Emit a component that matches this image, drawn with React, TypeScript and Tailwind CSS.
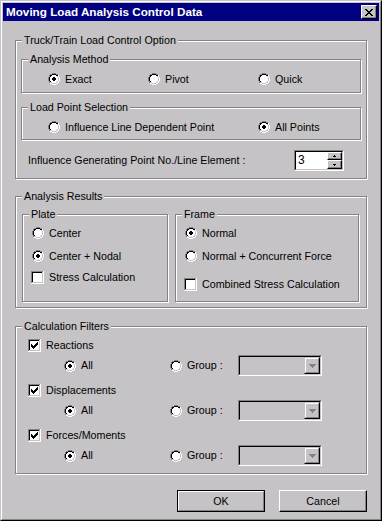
import React from "react";

type PixMap = Record<string, string>;

function Pix({ rows, colors }: { rows: string[]; colors: PixMap }) {
  const h = rows.length;
  const w = rows[0].length;
  const rects: React.ReactNode[] = [];
  rows.forEach((r, y) => {
    for (let x = 0; x < r.length; x++) {
      const c = colors[r[x]];
      if (c) rects.push(<rect key={`${x}-${y}`} x={x} y={y} width={1} height={1} fill={c} />);
    }
  });
  return (
    <svg width={w} height={h} viewBox={`0 0 ${w} ${h}`} shapeRendering="crispEdges" className="block shrink-0">
      {rects}
    </svg>
  );
}

const C: PixMap = { d: "#848284", k: "#000000", w: "#ffffff", h: "#ffffff", l: "#c6c3c6", K: "#000000" };

const RADIO = [
  "....dddd....",
  "..ddkkkkdd..",
  ".dkkwwwwkkh.",
  ".dkwwwwwwlh.",
  "dkwwwwwwwwlh",
  "dkwwwwwwwwlh",
  "dkwwwwwwwwlh",
  "dkwwwwwwwwlh",
  ".dkwwwwwwlh.",
  ".dllwwwwllh.",
  "..hhllllhh..",
  "....hhhh....",
];

function radioRows(checked: boolean) {
  if (!checked) return RADIO;
  const dot = [".KK.", "KKKK", "KKKK", ".KK."];
  return RADIO.map((r, y) => {
    if (y < 4 || y > 7) return r;
    const d = dot[y - 4];
    const s = r.split("");
    for (let i = 0; i < 4; i++) if (d[i] === "K") s[4 + i] = "K";
    return s.join("");
  });
}

function Radio({ checked = false }: { checked?: boolean }) {
  return <Pix rows={radioRows(checked)} colors={C} />;
}

function checkRows(checked: boolean) {
  const rows: string[] = [];
  for (let y = 0; y < 13; y++) {
    let s = "";
    for (let x = 0; x < 13; x++) {
      if (y === 12 || x === 12) s += "h";
      else if (y === 0 || x === 0) s += "d";
      else if (y === 11 || x === 11) s += "l";
      else if (y === 1 || x === 1) s += "k";
      else s += "w";
    }
    rows.push(s);
  }
  if (checked) {
    const m = ["......K", ".....KK", "K...KKK", "KK.KKK.", "KKKKK..", ".KKK...", "..K...."];
    for (let y = 0; y < 7; y++) {
      const s = rows[y + 3].split("");
      for (let x = 0; x < 7; x++) if (m[y][x] === "K") s[x + 3] = "K";
      rows[y + 3] = s.join("");
    }
  }
  return rows;
}

function Check({ checked = false }: { checked?: boolean }) {
  return <Pix rows={checkRows(checked)} colors={C} />;
}

function GroupBox({ label, className = "", children }: { label: string; className?: string; children?: React.ReactNode }) {
  return (
    <div className={`relative shrink-0 border border-[#848284] shadow-[inset_1px_1px_0_#ffffff,1px_1px_0_#ffffff] ${className}`}>
      <span className="absolute -top-[7px] left-[6px] px-[2px] bg-[#c6c3c6] leading-[13px] whitespace-nowrap">{label}</span>
      {children}
    </div>
  );
}

function RadioItem({ label, checked = false, className = "" }: { label: string; checked?: boolean; className?: string }) {
  return (
    <div className={`flex items-center shrink-0 ${className}`}>
      <Radio checked={checked} />
      <span className="ml-[5px] leading-[13px] whitespace-nowrap">{label}</span>
    </div>
  );
}

function SlotRadio({ label, checked = false, className = "" }: { label: string; checked?: boolean; className?: string }) {
  return (
    <div className={`flex items-center h-[12px] ${className}`}>
      <div className="w-[13px] flex justify-end">
        <Radio checked={checked} />
      </div>
      <span className="ml-[5px] leading-[13px] whitespace-nowrap">{label}</span>
    </div>
  );
}

function SlotCheck({ label, checked = false, className = "" }: { label: string; checked?: boolean; className?: string }) {
  return (
    <div className={`flex items-center h-[13px] ${className}`}>
      <Check checked={checked} />
      <span className="ml-[5px] leading-[13px] whitespace-nowrap">{label}</span>
    </div>
  );
}

function SpinBtn({ up }: { up: boolean }) {
  return (
    <div className={`flex items-center justify-center w-[15px] ${up ? "h-[8px]" : "h-[9px]"} bg-[#c6c3c6] border border-t-white border-l-white border-r-black border-b-black shadow-[inset_-1px_-1px_0_#848284]`}>
      <Pix rows={up ? [".K.", "KKK"] : ["KKK", ".K."]} colors={C} />
    </div>
  );
}

function Combo() {
  return (
    <div className="w-[84px] h-[21px] border border-t-[#848284] border-l-[#848284] border-r-white border-b-white">
      <div className="h-full border border-t-black border-l-black border-r-[#c6c3c6] border-b-[#c6c3c6] flex justify-end bg-[#c6c3c6]">
        <div className="w-[16px] h-full border border-t-[#c6c3c6] border-l-[#c6c3c6] border-r-black border-b-black">
          <div className="h-full border border-t-white border-l-white border-r-[#848284] border-b-[#848284] flex items-center justify-center">
            <Pix rows={["ddddddd", ".ddddd.", "..ddd..", "...d..."]} colors={C} />
          </div>
        </div>
      </div>
    </div>
  );
}

function FilterBlock({ label, className = "" }: { label: string; className?: string }) {
  return (
    <div className={`flex flex-col ${className}`}>
      <SlotCheck label={label} checked />
      <div className="flex items-center h-[21px] mt-[3px]">
        <RadioItem label="All" checked className="ml-[36px] w-[106px]" />
        <RadioItem label="Group :" className="w-[68px]" />
        <Combo />
      </div>
    </div>
  );
}

export default function App() {
  return (
    <div className="w-[382px] h-[521px] bg-[#c6c3c6] border border-t-[#c6c3c6] border-l-[#c6c3c6] border-r-black border-b-black font-['Liberation_Sans',Arial,sans-serif] text-[10.7px] text-black">
      <div className="h-full border border-t-white border-l-white border-r-[#848284] border-b-[#848284] p-px flex flex-col">
        {/* Title bar */}
        <div className="h-[18px] shrink-0 bg-[#000080] flex items-center justify-between pl-[3px] pr-[2px]">
          <span className="text-white font-bold text-[11.7px] leading-[14px] whitespace-nowrap">Moving Load Analysis Control Data</span>
          <div className="w-[16px] h-[14px] bg-[#c6c3c6] border border-t-white border-l-white border-r-black border-b-black shadow-[inset_-1px_-1px_0_#848284] flex items-center justify-center">
            <Pix
              rows={["KK....KK", ".KK..KK.", "..KKKK..", "...KK...", "..KKKK..", ".KK..KK.", "KK....KK"]}
              colors={C}
            />
          </div>
        </div>

        {/* Group 1 */}
        <GroupBox label="Truck/Train Load Control Option" className="mt-[19px] mx-[12px] h-[139px]">
          <div className="flex flex-col pl-[5px]">
            <GroupBox label="Analysis Method" className="mt-[18px] h-[34px] w-[340px]">
              <div className="flex items-center mt-[13px] h-[12px]">
                <RadioItem checked label="Exact" className="ml-[26px] w-[100px]" />
                <RadioItem label="Pivot" className="w-[110px]" />
                <RadioItem label="Quick" />
              </div>
            </GroupBox>
            <GroupBox label="Load Point Selection" className="mt-[14px] h-[33px] w-[340px]">
              <div className="flex items-center mt-[13px] h-[12px]">
                <RadioItem label="Influence Line Dependent Point" className="ml-[26px] w-[210px]" />
                <RadioItem checked label="All Points" />
              </div>
            </GroupBox>
            <div className="flex items-center mt-[10px] h-[21px]">
              <span className="ml-[7px] w-[266px] whitespace-nowrap leading-[13px]">Influence Generating Point No./Line Element :</span>
              <div className="w-[50px] h-[21px] border border-t-[#848284] border-l-[#848284] border-r-white border-b-white">
                <div className="h-full border border-t-black border-l-black border-r-[#c6c3c6] border-b-[#c6c3c6] bg-white flex">
                  <span className="flex-1 pl-[2px] leading-[17px] text-[12px]">3</span>
                  <div className="flex flex-col">
                    <SpinBtn up />
                    <SpinBtn up={false} />
                  </div>
                </div>
              </div>
            </div>
          </div>
        </GroupBox>

        {/* Group 2 */}
        <GroupBox label="Analysis Results" className="mt-[17px] mx-[12px] h-[112px]">
          <div className="flex pl-[6px] mt-[17px]">
            <GroupBox label="Plate" className="w-[146px] h-[88px]">
              <div className="flex flex-col pl-[8px] pt-[12px]">
                <SlotRadio label="Center" />
                <SlotRadio label="Center + Nodal" checked className="mt-[11px]" />
                <SlotCheck label="Stress Calculation" className="mt-[9px]" />
              </div>
            </GroupBox>
            <GroupBox label="Frame" className="ml-[7px] w-[184px] h-[88px]">
              <div className="flex flex-col pl-[8px] pt-[12px]">
                <SlotRadio label="Normal" checked />
                <SlotRadio label="Normal + Concurrent Force" className="mt-[11px]" />
                <SlotCheck label="Combined Stress Calculation" className="mt-[16px]" />
              </div>
            </GroupBox>
          </div>
        </GroupBox>

        {/* Group 3 */}
        <GroupBox label="Calculation Filters" className="mt-[18px] mx-[12px] h-[148px]">
          <div className="flex flex-col pl-[12px] pt-[12px]">
            <FilterBlock label="Reactions" />
            <FilterBlock label="Displacements" className="mt-[8px]" />
            <FilterBlock label="Forces/Moments" className="mt-[8px]" />
          </div>
        </GroupBox>

        {/* Buttons */}
        <div className="flex justify-end gap-[14px] mt-[16px] mr-[12px]">
          <div className="w-[88px] h-[22px] border border-black">
            <div className="h-full border border-t-white border-l-white border-r-[#848284] border-b-[#848284] flex items-center justify-center leading-[13px]">
              OK
            </div>
          </div>
          <div className="w-[88px] h-[22px] border border-t-white border-l-white border-r-black border-b-black shadow-[inset_-1px_-1px_0_#848284] flex items-center justify-center leading-[13px]">
            Cancel
          </div>
        </div>
      </div>
    </div>
  );
}
